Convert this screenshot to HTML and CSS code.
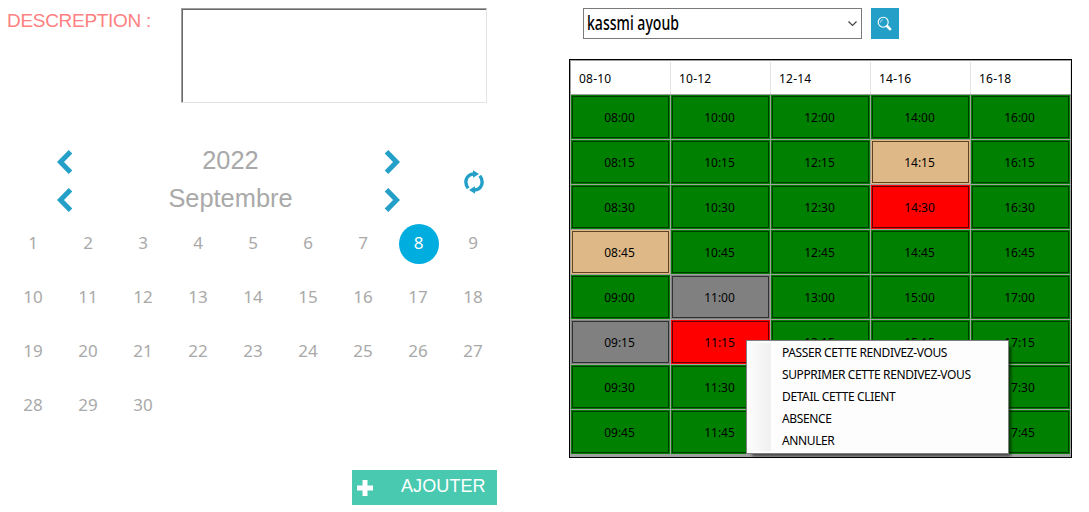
FILE: index.html
```html
<!DOCTYPE html>
<html lang="fr">
<head>
<meta charset="utf-8">
<title>Rendez-vous</title>
<link rel="stylesheet" href="styles.css">
</head>
<body>
<main class="app">
  <section class="left">
    <div class="desc"><label class="desc-label" for="d">DESCREPTION :</label><textarea class="desc-box" id="d"></textarea></div>
    <div class="picker">
      <div class="lines">
        <div class="line"><svg class="chev" viewBox="0 0 16 24"><path d="M13.500 1.800 3.500 12l10 10.200"/></svg><span class="big">2022</span><svg class="chev" viewBox="0 0 16 24"><path d="M2.500 1.800 12.500 12l-10 10.200"/></svg></div>
        <div class="line"><svg class="chev" viewBox="0 0 16 24"><path d="M13.500 1.800 3.500 12l10 10.200"/></svg><span class="big">Septembre</span><svg class="chev" viewBox="0 0 16 24"><path d="M2.500 1.800 12.500 12l-10 10.200"/></svg></div>
      </div>
      <svg class="refresh" viewBox="0 0 22 24"><g fill="none" stroke="#24a0c8" stroke-width="3.400"><path d="M5.200 18.200C1 13 2.500 4.500 11 3.900"/><path d="M16.800 5.800C21 11 19.500 19.500 11 20.100"/></g><path fill="#24a0c8" d="M10 .2 16 4l-6 3.800zM12 16.200 6 20l6 3.800z"/></svg>
    </div>
    <div class="days">
      <span>1</span><span>2</span><span>3</span><span>4</span><span>5</span><span>6</span><span>7</span><span class="on">8</span><span>9</span>
      <span>10</span><span>11</span><span>12</span><span>13</span><span>14</span><span>15</span><span>16</span><span>17</span><span>18</span>
      <span>19</span><span>20</span><span>21</span><span>22</span><span>23</span><span>24</span><span>25</span><span>26</span><span>27</span>
      <span>28</span><span>29</span><span>30</span>
    </div>
    <button class="add"><svg class="plus" viewBox="0 0 16 16"><path d="M5.500 0h5v5.500H16v5h-5.500V16h-5v-5.500H0v-5h5.500z"/></svg><span class="add-text">AJOUTER</span></button>
  </section>
  <section class="right">
    <div class="search">
      <div class="combo"><span class="combo-text">kassmi ayoub</span><svg class="caret" viewBox="0 0 9 6"><path d="M.5.500l4 4 4-4"/></svg></div>
      <button class="find"><svg class="lens" viewBox="0 0 16 16"><circle cx="6.200" cy="6.200" r="5"/><path class="shine" d="M3.500 6.500a3 3 0 0 1 2.500-3"/><path class="handle" d="M9.500 9.500l4.300 4.300"/></svg></button>
    </div>
    <div class="grid">
      <div class="head"><span>08-10</span><span>10-12</span><span>12-14</span><span>14-16</span><span>16-18</span></div>
      <div class="slots">
        <button>08:00</button><button>10:00</button><button>12:00</button><button>14:00</button><button>16:00</button>
        <button>08:15</button><button>10:15</button><button>12:15</button><button class="tan">14:15</button><button>16:15</button>
        <button>08:30</button><button>10:30</button><button>12:30</button><button class="red">14:30</button><button>16:30</button>
        <button class="tan">08:45</button><button>10:45</button><button>12:45</button><button>14:45</button><button>16:45</button>
        <button>09:00</button><button class="gray">11:00</button><button>13:00</button><button>15:00</button><button>17:00</button>
        <button class="gray">09:15</button><button class="red">11:15</button><button>13:15</button><button>15:15</button><button>17:15</button>
        <button>09:30</button><button>11:30</button><button>13:30</button><button>15:30</button><button>17:30</button>
        <button>09:45</button><button>11:45</button><button>13:45</button><button>15:45</button><button>17:45</button>
      </div>
      <div class="menu">
        <div>PASSER CETTE RENDIVEZ-VOUS</div><div>SUPPRIMER CETTE RENDIVEZ-VOUS</div><div>DETAIL CETTE CLIENT</div><div>ABSENCE</div><div>ANNULER</div>
      </div>
    </div>
  </section>
</main>
</body>
</html>
```

FILE: styles.css
```css
* { box-sizing: border-box; }
body { margin: 0; background: #fff; overflow: hidden; }
button { border: 0; padding: 0; margin: 0; border-radius: 0; }
svg { display: block; flex: none; }
.app { display: flex; width: 1089px; height: 512px; }
.left { width: 569px; padding-top: 8px; font-family: "Liberation Sans", Arial, sans-serif; }
.desc { display: flex; height: 95px; padding-left: 7px; }
.desc-label { width: 174px; font-size: 19px; line-height: 25px; letter-spacing: -.3px; color: #ff8080; white-space: nowrap; }
.desc-box { width: 306px; height: 95px; resize: none; outline: 0; border: 1px solid; border-color: #a0a0a0 #e3e3e3 #e3e3e3 #a0a0a0; box-shadow: inset 1px 1px #696969; }
.picker { display: flex; align-items: center; padding: 40px 0 0 57px; }
.lines { width: 343px; }
.line { display: flex; justify-content: space-between; align-items: center; height: 38px; }
.chev { width: 16px; height: 24px; fill: none; stroke: #24a0c8; stroke-width: 5; }
.big { font-size: 25.4px; line-height: 30px; color: #a9a9a9; margin: -4px -4px 0 0; }
.refresh { width: 22px; height: 24px; margin-left: 63px; margin-top: 2px; }
.days { display: grid; grid-template-columns: repeat(9, 55px); grid-auto-rows: 54px; padding-left: 6px; margin-top: -2px; font: 17px "Noto Sans", sans-serif; color: #a9a9a9; }
.days span { height: 54px; line-height: 52px; text-align: center; padding-right: 1px; }
.days .on { width: 40px; height: 40px; margin: 7px 0 0 8px; line-height: 38px; border-radius: 50%; background: #00addf; color: #fff; }
.add { display: flex; align-items: center; width: 145px; height: 35px; margin: 37px 0 0 352px; padding-left: 5px; background: #48c9b0; color: #fff; font: 18px "Liberation Sans", Arial, sans-serif; }
.plus { width: 16px; height: 16px; fill: #fff; }
.add-text { margin: -3px 0 0 28px; letter-spacing: .1px; }
.right { width: 520px; padding-top: 8px; }
.search { display: flex; gap: 9px; padding-left: 14px; height: 51px; }
.combo { display: flex; justify-content: space-between; align-items: center; width: 279px; height: 31px; border: 1px solid #7a7a7a; padding: 0 4px 0 3px; }
.combo-text { font: 500 19px/29px "Noto Sans", sans-serif; color: #000; transform: scaleX(.74); transform-origin: 0 50%; white-space: nowrap; }
.caret { width: 9px; height: 6px; fill: none; stroke: #444; stroke-width: 1.2; }
.find { display: flex; align-items: center; justify-content: center; width: 28px; height: 31px; background: #24a0c8; }
.lens { width: 16px; height: 16px; fill: none; stroke: #fff; stroke-width: 1.1; }
.shine { stroke-width: .6; }
.handle { stroke-width: 2.6; }
.grid { position: relative; width: 503px; height: 399px; border: 1px solid #000; padding: 1px 0 0 1px; background: #a0a0a0; font: 12px "Noto Sans", sans-serif; color: #000; }
.head { display: grid; grid-template-columns: repeat(5, 100px); height: 33px; background: #fff; margin-bottom: 1px; }
.head span { height: 33px; padding-left: 8px; line-height: 35px; letter-spacing: .2px; background: linear-gradient(#e3e3e3, #e3e3e3) right bottom / 1px 32px no-repeat; }
.slots { display: grid; grid-template-columns: repeat(5, 99px); grid-auto-rows: 44px; gap: 1px; }
.slots button { font: 12px "Noto Sans", sans-serif; color: #000; background: #008000; outline: 1px solid #003c00; outline-offset: -2px; padding: 1px 2px 0 0; }
.slots .tan { background: #deb887; outline-color: #5f4320; }
.slots .red { background: #f00; outline-color: #600000; }
.slots .gray { background: #808080; outline-color: #303030; }
.menu { position: absolute; left: 176px; top: 280px; width: 263px; height: 114px; padding: 2px; border: 1px solid #808080; background: linear-gradient(90deg, #fcfcfc, #f0f0f0) 2px 2px / 22px 108px no-repeat #fdfdfd; box-shadow: 4px 4px 3px -2px rgba(0, 0, 0, .6); }
.menu div { height: 22px; line-height: 20px; padding-left: 33px; letter-spacing: -.38px; white-space: nowrap; }
```
